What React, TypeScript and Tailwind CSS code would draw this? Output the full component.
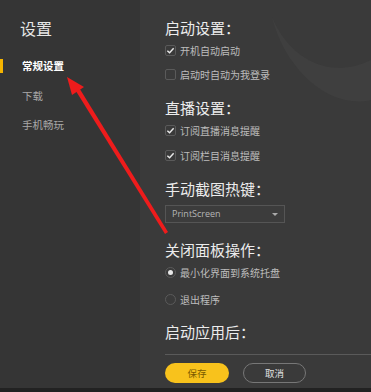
import React from "react";

function Check({checked}: {checked: boolean}) {
  return <span className="w-[11px] h-[11px] border border-[#5a5a5a] rounded-[2px] flex items-center justify-center bg-[#3a3a3a]">
    {checked && <svg width="9" height="9" viewBox="0 0 10 10"><path d="M1.5 5.2 L4 7.5 L8.5 2.5" stroke="#e8e8e8" strokeWidth="1.6" fill="none"/></svg>}
  </span>
}

function Radio({checked}: {checked: boolean}) {
  return <span className="w-[11px] h-[11px] border border-[#5a5a5a] rounded-full flex items-center justify-center">
    {checked && <span className="w-[5px] h-[5px] rounded-full bg-[#e8e8e8]"></span>}
  </span>
}

const Heading = ({children, className = ""}: {children: React.ReactNode, className?: string}) =>
  <h3 className={"text-[15px] leading-[20px] text-[#ececec] " + className}>{children}</h3>

const Row = ({children}: {children: React.ReactNode}) =>
  <div className="flex items-center gap-[4px] h-[14px] text-[10px] text-[#bdbdbd]">{children}</div>

export default function App() {
  return <div className="relative w-[371px] h-[392px] overflow-hidden bg-[#222] flex flex-col" style={{fontFamily: '"Noto Sans CJK SC", "Noto Sans", sans-serif'}}>
    <div className="flex h-[388px]">
      <div className="w-[140px] bg-[#353535] flex flex-col">
        <h2 className="pl-[20px] pt-[17px] text-[16px] leading-[22px] text-[#e6e6e6]">设置</h2>
        <div className="mt-[20px] flex flex-col gap-[15px]">
          <div className="flex items-center h-[14px]">
            <span className="w-[3px] h-[14px] bg-[#f5b400]"></span>
            <span className="ml-[19px] text-[10.5px] font-bold text-white">常规设置</span>
          </div>
          <div className="pl-[22px] h-[14px] text-[10.5px] text-[#a8a8a8]">下载</div>
          <div className="pl-[22px] h-[14px] text-[10.5px] text-[#a8a8a8]">手机畅玩</div>
        </div>
      </div>
      <div className="flex-1 bg-[#3a3a3a] flex flex-col pl-[25px]">
        <Heading className="mt-[18px]">启动设置：</Heading>
        <div className="mt-[5px] flex flex-col gap-[10px]">
          <Row><Check checked /> 开机自动启动</Row>
          <Row><Check checked={false} /> 启动时自动为我登录</Row>
        </div>
        <Heading className="mt-[17px]">直播设置：</Heading>
        <div className="mt-[5px] flex flex-col gap-[11px]">
          <Row><Check checked /> 订阅直播消息提醒</Row>
          <Row><Check checked /> 订阅栏目消息提醒</Row>
        </div>
        <Heading className="mt-[17px]">手动截图热键：</Heading>
        <div className="mt-[6px] w-[120px] h-[18px] border border-[#555] bg-[#3c3c3c] flex items-center justify-between px-[6px]">
          <span className="text-[9px] text-[#b5b5b5]" style={{fontFamily: '"Open Sans", sans-serif'}}>PrintScreen</span>
          <span className="w-0 h-0 border-l-[3px] border-r-[3px] border-t-[3px] border-l-transparent border-r-transparent border-t-[#aaa]"></span>
        </div>
        <Heading className="mt-[17px]">关闭面板操作：</Heading>
        <div className="mt-[5px] flex flex-col gap-[13px]">
          <Row><Radio checked /> 最小化界面到系统托盘</Row>
          <Row><Radio checked={false} /> 退出程序</Row>
        </div>
        <Heading className="mt-[16px]">启动应用后：</Heading>
        <div className="mt-[12px] h-px bg-[#5a5a5a]"></div>
        <div className="mt-[8px] flex gap-[14px]">
          <button className="w-[64px] h-[20px] rounded-full bg-[#f8c21c] text-[9.5px] text-[#7a5a00]">保存</button>
          <button className="w-[63px] h-[20px] rounded-full border border-[#777] text-[9.5px] text-[#e0e0e0]">取消</button>
        </div>
      </div>
    </div>
    <svg className="absolute left-[270px] top-0 pointer-events-none" width="101" height="110" viewBox="0 0 101 110">
      <path d="M2 17 C 20 60, 60 80, 101 60 L 101 100 C 60 110, 15 70, 2 17 Z" fill="#444" opacity="0.5"/>
    </svg>
    <svg className="absolute left-0 top-0 pointer-events-none" width="371" height="392" viewBox="0 0 371 392">
      <polygon points="74,88 78,86 168,232 165,234" fill="#ee1c1c"/>
      <polygon points="67,77 84,87 72,95" fill="#ee1c1c"/>
    </svg>
  </div>
}
